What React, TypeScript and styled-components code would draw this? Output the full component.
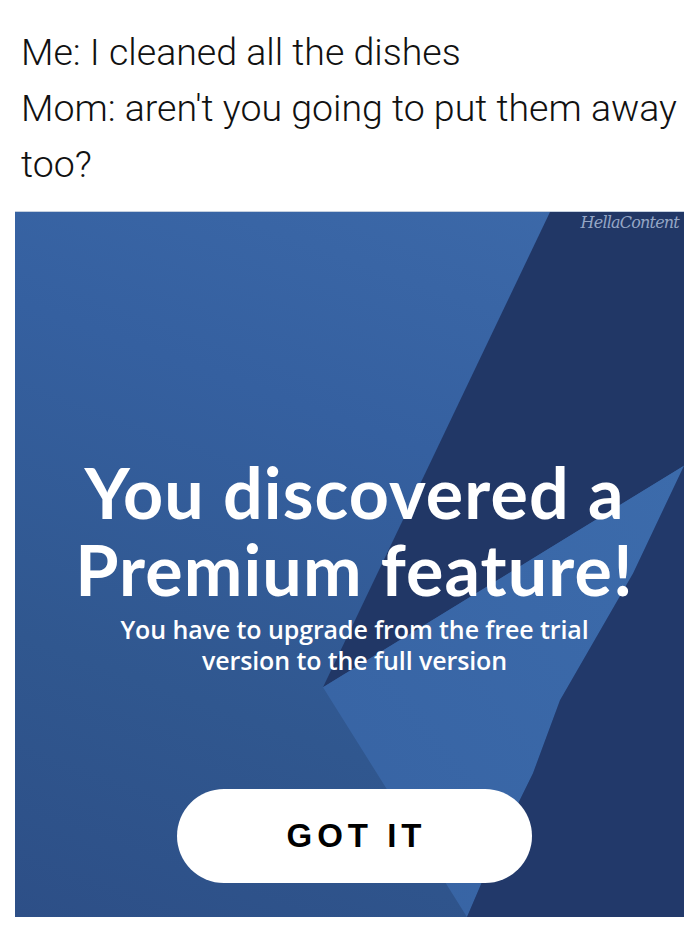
import * as React from 'react'
import styled, { createGlobalStyle } from 'styled-components'

const GlobalStyle = createGlobalStyle`
    html, body {
        margin: 0;
        padding: 0;
        background: #ffffff;
    }
`

const Page = styled.div`
    width: 700px;
    height: 929px;
    background: #ffffff;
    overflow: hidden;
`

const Caption = styled.p`
    margin: 0;
    padding: 24px 8px 0 21px;
    height: 192px;
    box-sizing: border-box;
    font-family: Roboto, 'Liberation Sans', sans-serif;
    font-weight: 300;
    font-size: 37.5px;
    line-height: 56px;
    color: #111111;
`

const Card = styled.section`
    position: relative;
    margin: 19px 0 0 15px;
    width: 669px;
    height: 706px;
    background: linear-gradient(200deg, #3d6aaa 0%, #3560a0 35%, #30578f 70%, #2d4f87 100%);
    border-top: 1px solid #c5d0df;
    box-sizing: border-box;
    overflow: hidden;
    display: flex;
    flex-direction: column;
    align-items: center;
    padding-top: 242px;
    padding-left: 10px;
`

const Shapes = styled.svg`
    position: absolute;
    left: 0;
    top: 0;
    width: 100%;
    height: 100%;
`

const Watermark = styled.span`
    position: absolute;
    top: 1px;
    right: 5px;
    font-family: 'DejaVu Serif', serif;
    font-style: italic;
    font-size: 16px;
    letter-spacing: -0.8px;
    color: #a9bad6;
    opacity: 0.85;
`

const Title = styled.h1`
    position: relative;
    margin: 0;
    font-family: Lato, 'Noto Sans', sans-serif;
    font-weight: 700;
    font-size: 70px;
    line-height: 77px;
    letter-spacing: 1.1px;
    color: #ffffff;
    text-align: center;
`

const Subtitle = styled.p`
    position: relative;
    margin: 6px 0 0 0;
    font-family: 'Open Sans', sans-serif;
    font-weight: 600;
    font-size: 25px;
    line-height: 31px;
    letter-spacing: -0.1px;
    color: #ffffff;
    text-align: center;
`

const GotIt = styled.button`
    position: relative;
    margin-top: 113px;
    width: 355px;
    height: 94px;
    border: none;
    border-radius: 47px;
    background: #ffffff;
    font-family: 'Liberation Sans', Arial, sans-serif;
    font-weight: 700;
    font-size: 33px;
    letter-spacing: 5px;
    padding-left: 10px;
    color: #000000;
    cursor: pointer;
`

const BackgroundShapes = (): JSX.Element => (
    <Shapes viewBox="0 0 669 706" preserveAspectRatio="none">
        <defs>
            <linearGradient id="wedge" x1="1" y1="0" x2="0" y2="1">
                <stop offset="0" stopColor="#3c6bab" />
                <stop offset="1" stopColor="#3763a3" />
            </linearGradient>
        </defs>
        <polygon fill="#213766" points="535,0 669,0 669,254 308,476" />
        <polygon fill="url(#wedge)" points="669,254 308,476 452,706 485,629 518,562 545,489 618,362" />
        <polygon fill="#22396a" points="669,254 618,362 545,489 518,562 485,629 452,706 669,706" />
    </Shapes>
)

const App = (): JSX.Element => {
    return (
        <Page>
            <GlobalStyle />
            <Caption>
                Me: I cleaned all the dishes
                <br />
                Mom: aren't you going to put them away too?
            </Caption>
            <Card>
                <BackgroundShapes />
                <Watermark>HellaContent</Watermark>
                <Title>
                    You discovered a
                    <br />
                    Premium feature!
                </Title>
                <Subtitle>
                    You have to upgrade from the free trial
                    <br />
                    version to the full version
                </Subtitle>
                <GotIt>GOT IT</GotIt>
            </Card>
        </Page>
    )
}

export default App
